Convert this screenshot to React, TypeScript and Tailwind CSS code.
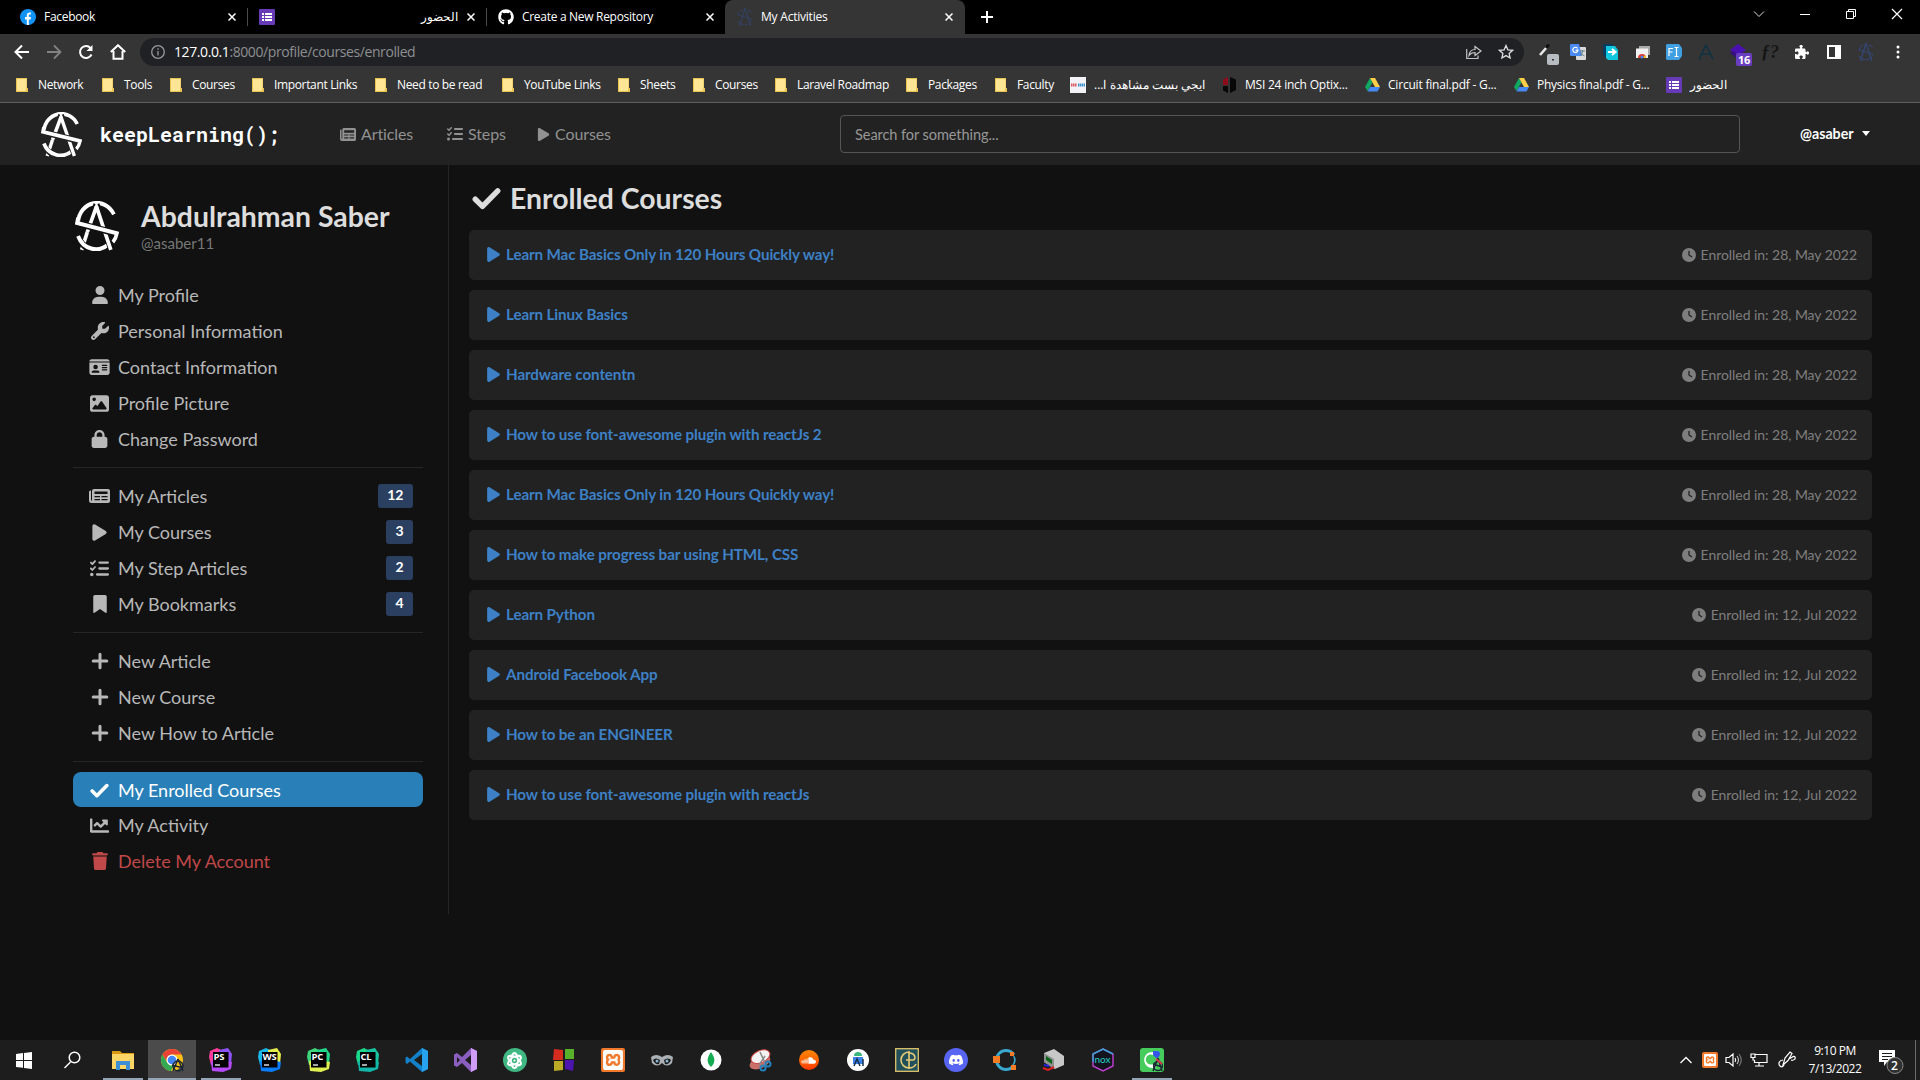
import type { ReactNode } from "react";
import {
  FaUser, FaWrench, FaIdCard, FaImage, FaLock, FaPlay, FaListCheck,
  FaBookmark, FaTrash, FaClock, FaGithub, FaPuzzlePiece, FaAtom,
} from "react-icons/fa6";
import { FaChartLine } from "react-icons/fa";
import { SiXampp, SiDiscord, SiSoundcloud } from "react-icons/si";

function Logo({ className, gap = "#222222" }: { className: string; gap?: string }) {
  return (
    <svg viewBox="10 7 43 45" preserveAspectRatio="none" className={className} fill="none">
      <path d="M13 26A18.500 18.500 0 0 1 48 19" stroke="#fff" strokeWidth="3.8" />
      <path d="M31 10 22 35M31 10l9 25" stroke={gap} strokeWidth="6" />
      <path d="M22 35 16.500 51" stroke="#fff" strokeWidth="3.600" />
      <path d="M12.500 38.500A19 19 0 0 0 43 46" stroke={gap} strokeWidth="6" />
      <path d="M13 38.500A18.800 18.800 0 0 0 42.500 46" stroke="#fff" strokeWidth="3.8" />
      <path d="M39 33l6.500 18" stroke={gap} strokeWidth="6" />
      <path d="M31 12 22 35M31 12 45 51" stroke="#fff" strokeWidth="3.6" />
      <path d="m29 13 2-6 2 6z" fill="#fff" />
      <path d="M14 27.500 50 36" stroke={gap} strokeWidth="6" />
      <path d="M13 22 12 26.800 51 36q-1 5-4 8" stroke="#fff" strokeWidth="3.6" />
    </svg>
  );
}

function Newspaper({ className }: { className: string }) {
  return (
    <svg viewBox="0 0 21 14" preserveAspectRatio="none" className={className}>
      <path fill="currentColor" fillRule="evenodd" d="M5 0h14a2 2 0 0 1 2 2v10a2 2 0 0 1-2 2H2.500A2.500 2.500 0 0 1 0 11.500V3a1.500 1.500 0 0 1 1.500-1.500H2v10h1V2a2 2 0 0 1 2-2zM5.500 2.500v2.500h13V2.500zM5.500 7v1.200h5.500V7zM12.500 7v1.200h6V7zM5.500 10v1.200h5.500V10zM12.500 10v1.200h6V10z" />
    </svg>
  );
}

function Check({ className }: { className: string }) {
  return (
    <svg viewBox="0 0 20 16" className={className} fill="none" stroke="currentColor" strokeWidth="3.800" strokeLinecap="round" strokeLinejoin="round">
      <path d="m2.200 8.500 5 5L17.800 2.700" />
    </svg>
  );
}

function Plus() {
  return (
    <svg viewBox="0 0 18 18" className="size-[18px]" fill="none" stroke="currentColor" strokeWidth="3" strokeLinecap="round">
      <path d="M9 2.200v13.600M2.200 9h13.600" />
    </svg>
  );
}

function MiniLogo({ color }: { color: string }) {
  return (
    <svg viewBox="0 0 18 20" className="h-5 w-[18px]" fill="none" stroke={color} strokeWidth="1.3">
      <path d="M9 1 3.500 19M9 1l5.500 18M2 8l14 4" />
      <path d="M2 8a7.500 7.500 0 0 1 4-5M12 3a7 7 0 0 1 3.500 3M2 14a8 8 0 0 0 14-1" strokeDasharray="3 1" />
    </svg>
  );
}

function FormsIcon() {
  return (
    <svg viewBox="0 0 16 16" className="size-4 shrink-0">
      <rect width="16" height="16" rx="1" fill="#673ab7" />
      <path d="M3 4h2v2H3zM6 4h7v2H6zM3 7h2v2H3zM6 7h7v2H6zM3 10h2v2H3zM6 10h7v2H6z" fill="#fff" />
    </svg>
  );
}

function Folder() {
  return (
    <svg viewBox="0 0 12 14" className="h-[14px] w-3 shrink-0">
      <path d="M0 0h11v10h1v4H0z" fill="#e8c34f" />
      <path d="M1 1h9.500v9L9.500 13H1z" fill="#ffe694" />
    </svg>
  );
}

function Drive() {
  return (
    <svg viewBox="0 0 15 14" className="h-[14px] w-[15px] shrink-0">
      <path d="M5 0 0 9l2.500 4L7.500 4.500z" fill="#11a861" />
      <path d="M5 0h5l5 9h-5z" fill="#ffcf48" />
      <path d="M5 9h10l-2.500 4.500h-10z" fill="#4688f4" />
    </svg>
  );
}

function Close() {
  return (
    <svg viewBox="0 0 8 8" className="size-2 shrink-0" stroke="#fff" strokeWidth="1.500">
      <path d="m.5.5 7 7m0-7-7 7" />
    </svg>
  );
}

function TabStrip() {
  return (
    <div className="flex h-[34px] items-center bg-black text-[12px] tracking-[-0.3px] text-white">
      <div className="flex w-[248px] items-center border-r border-[#4a4a4a] pl-5 pr-[11px]">
        <svg viewBox="0 0 16 16" className="mr-2 size-4">
          <circle cx="8" cy="8" r="8" fill="#1192f4" />
          <path d="M6.800 16v-5.600H5V8.100h1.800V6.600c0-2 1-3 2.900-3h1.200v2H9.800c-.7 0-1 .4-1 1.100v1.400h2.100l-.3 2.300H8.800V16z" fill="#fff" />
        </svg>
        <span className="flex-1">Facebook</span>
        <Close />
      </div>
      <div className="flex w-[239px] items-center border-r border-[#4a4a4a] pl-[11px] pr-[11px]">
        <FormsIcon />
        <span className="mr-[9px] flex-1 text-right tracking-normal">الحضور</span>
        <Close />
      </div>
      <div className="flex w-[238px] items-center pl-[11px] pr-[11px]">
        <FaGithub className="mr-2 size-4" />
        <span className="flex-1">Create a New Repository</span>
        <Close />
      </div>
      <div className="flex h-full w-[240px] items-center rounded-t-lg bg-[#353535] pl-[11px] pr-3">
        <MiniLogo color="#33415f" />
        <span className="ml-[7px] flex-1 tracking-[-0.22px]">My Activities</span>
        <Close />
      </div>
      <svg viewBox="0 0 12 12" className="ml-4 size-3" stroke="#fff" strokeWidth="2"><path d="M6 0v12M0 6h12" /></svg>
      <div className="ml-auto flex items-center gap-[34px] self-start pr-[17px] pt-2">
        <svg viewBox="0 0 12 12" className="size-3" fill="none" stroke="#ddd"><path d="m1 3.500 5 5 5-5" /></svg>
        <svg viewBox="0 0 12 12" className="size-3" stroke="#fff"><path d="M1 6.500h10" /></svg>
        <svg viewBox="0 0 12 12" className="size-3" fill="none" stroke="#fff"><path d="M1.500 3.500h7v7h-7zM3.500 3V1.500h7v7H9" /></svg>
        <svg viewBox="0 0 12 12" className="size-3" stroke="#fff" strokeWidth="1.200"><path d="m1 1 10 10m0-10L1 11" /></svg>
      </div>
    </div>
  );
}

function Slot({ className, children }: { className: string; children: ReactNode }) {
  return <div className={`relative flex h-6 shrink-0 items-center justify-center ${className}`}>{children}</div>;
}

function Toolbar() {
  return (
    <div className="flex h-9 items-center bg-[#353535] pl-[6px]">
      <Slot className="w-8">
        <svg viewBox="0 0 16 16" className="size-4" fill="none" stroke="#fff" strokeWidth="2"><path d="M15 8H2M8 1.500 1.500 8 8 14.500" /></svg>
      </Slot>
      <Slot className="w-8">
        <svg viewBox="0 0 16 16" className="size-4" fill="none" stroke="#828282" strokeWidth="1.800"><path d="M1 8h13M8 1.500 14.500 8 8 14.500" /></svg>
      </Slot>
      <Slot className="w-8">
        <svg viewBox="0 0 16 16" className="size-4" fill="none" stroke="#fff" strokeWidth="2"><path d="M13.500 10.500A6 6 0 1 1 12.500 4" /><path d="M14.500 1v6h-6z" fill="#fff" stroke="none" /></svg>
      </Slot>
      <Slot className="w-8">
        <svg viewBox="0 0 16 16" className="size-4" fill="none" stroke="#fff" strokeWidth="2"><path d="M.8 8 8 1.200 15.200 8M3.500 7v7.800h9V7" /></svg>
      </Slot>
      <div className="ml-[6px] flex h-7 w-[1384px] items-center rounded-full bg-[#202124] pl-[11px] pr-[2px] text-[14px] tracking-[-0.41px]">
        <svg viewBox="0 0 14 14" className="mr-[9px] size-[14px]" fill="none" stroke="#9a9a9a" strokeWidth="1.300">
          <circle cx="7" cy="7" r="6.300" /><path d="M7 6v4.500M7 3.300v1.500" />
        </svg>
        <span className="flex-1 pb-px text-[#8d8f92]"><span className="text-white">127.0.0.1</span>:8000/profile/courses/enrolled</span>
        <Slot className="w-8">
          <svg viewBox="0 0 16 16" className="size-4" fill="none" stroke="#c4c4c4" strokeWidth="1.200"><path d="M.7 5v9.500H12V11.500M3 11.500C3.500 7.500 5.500 5.500 9 5.500V2.500L15 7l-6 4.500V8.500C6.500 8.500 4.500 9.500 3 11.500z" /></svg>
        </Slot>
        <Slot className="w-8">
          <svg viewBox="0 0 16 16" className="size-4" fill="none" stroke="#ddd" strokeWidth="1.300"><path d="m8 1.500 1.900 4.300 4.700.5-3.500 3.100 1 4.600L8 11.600 3.900 14l1-4.600-3.500-3.100 4.700-.5z" /></svg>
        </Slot>
      </div>
      <Slot className="ml-[6px] w-8">
        <svg viewBox="0 0 22 22" className="ml-[5px] mt-[5px] size-[22px] shrink-0">
          <path d="m2 11 7-8" stroke="#e8e8e8" strokeWidth="2.600" /><path d="m8 4 3-3.500" stroke="#111" strokeWidth="3" />
          <rect x="9" y="10" width="12" height="11" rx="2" fill="#b6bcc2" /><rect x="14" y="15" width="2" height="1.500" fill="#333" />
        </svg>
      </Slot>
      <Slot className="w-8">
        <svg viewBox="0 0 16 16" className="size-4">
          <rect x="6" y="3" width="10" height="13" rx="1" fill="#dadada" /><path d="M0 1q0-1 1-1h8l3 12H1q-1 0-1-1z" fill="#4b8bf5" />
          <path d="M7.500 4.300A2.600 2.600 0 1 0 8 6.200H5.500" stroke="#fff" strokeWidth="1.200" fill="none" /><path d="M10 7h5M12.500 6v1c0 2-1 4-2 5m0-4c1 2 2 3 4 4" stroke="#607d8b" fill="none" />
        </svg>
      </Slot>
      <Slot className="w-[33px]">
        <svg viewBox="0 0 16 16" className="size-4"><path d="M0 0h9l2 3v11H3L0 10z" fill="#063d60" /><path d="M3 2h9l3 4v10H5l-2-2z" fill="#11c7dd" /><path d="M5 8h7M9 5l3.500 3L9 11" stroke="#fff" strokeWidth="2" fill="none" /></svg>
      </Slot>
      <Slot className="w-[31px]">
        <svg viewBox="0 0 16 16" className="size-4"><path d="M4 2h11v9H4z" fill="#aaa" /><path d="M1 4.500h12V14H1z" fill="#f2f2f2" /><path d="M3 14a4 4 0 0 1 8 0z" fill="#df3b30" /><circle cx="7" cy="13" r="1.500" fill="#4285f4" /><path d="M9 14a3 3 0 0 0-.5-2l2-.5.8 2.500z" fill="#f6c026" /></svg>
      </Slot>
      <Slot className="w-8">
        <svg viewBox="0 0 16 16" className="size-4"><path d="M1 0h12l3 4v8l-3 4H1l-1-1V1z" fill="#3f9fe0" /><path d="M3 12V4.500h4M3 8h3.500M8.500 3.500h4M10.500 3.500v9M8.500 12.500h4" stroke="#fff" strokeWidth="1.200" fill="none" /></svg>
      </Slot>
      <Slot className="w-8">
        <svg viewBox="0 0 16 16" className="size-4" fill="none" stroke="#123242" strokeWidth="1.700"><path d="M1 15.500 8 1l7 14.500M4 10h8" /></svg>
      </Slot>
      <Slot className="w-8">
        <svg viewBox="0 0 16 16" className="size-4"><path d="m8 0 8 6-8 6-8-6z" fill="#4a10b0" /><path d="m0 9 8 6 3-2-8-6z" fill="#351080" /></svg>
        <span className="absolute left-[14px] top-[13px] rounded-[2px] bg-[#6a3ec0] px-[2px] text-[11px] font-bold leading-[13px] tracking-tight text-white">16</span>
      </Slot>
      <Slot className="w-8"><span className="font-['Liberation_Serif',serif] text-[18px] font-bold italic text-[#151515]">ƒ?</span></Slot>
      <Slot className="w-8"><FaPuzzlePiece className="size-[14px] text-white" /></Slot>
      <Slot className="w-8">
        <svg viewBox="0 0 14 14" className="size-[14px]"><path d="M0 0h14v14H0zM2 2v10h6V2z" fillRule="evenodd" fill="#fff" /></svg>
      </Slot>
      <Slot className="w-8"><MiniLogo color="#344674" /></Slot>
      <Slot className="w-8">
        <svg viewBox="0 0 4 14" className="h-[14px] w-1" fill="#fff"><circle cx="2" cy="2" r="1.500" /><circle cx="2" cy="7" r="1.500" /><circle cx="2" cy="12" r="1.500" /></svg>
      </Slot>
    </div>
  );
}

const bookmarks = [
  ["Network", "w-[86px]"], ["Tools", "w-[68px]"], ["Courses", "w-[82px]"], ["Important Links", "w-[123px]"],
  ["Need to be read", "w-[127px]"], ["YouTube Links", "w-[116px]"], ["Sheets", "w-[75px]"], ["Courses", "w-[82px]"],
  ["Laravel Roadmap", "w-[131px]"], ["Packages", "w-[89px]"], ["Faculty", "w-[75px]"],
];

function BookmarkBar() {
  return (
    <div className="flex h-[33px] items-center whitespace-nowrap border-b border-[#5f5f5f] bg-[#353535] pb-[3px] pl-4 text-[12px] tracking-[-0.35px] text-white">
      {bookmarks.map(([label, width], i) => (
        <div key={i} className={`flex shrink-0 items-center gap-[10px] ${width}`}><Folder />{label}</div>
      ))}
      <div className="flex w-[151px] shrink-0 items-center gap-2">
        <svg viewBox="0 0 16 16" className="size-4 shrink-0"><rect width="16" height="16" fill="#f2f2f6" /><path d="M1 8h6" stroke="#df5a5a" strokeWidth="3" strokeDasharray="1.500 .5" /><path d="M8 8h7" stroke="#3b90d0" strokeWidth="3" strokeDasharray="1.500 .5" /></svg>
        <span dir="rtl" className="text-[12px]">ايجي بست مشاهدة ا...</span>
      </div>
      <div className="flex w-[144px] shrink-0 items-center gap-2 tracking-[-0.22px]">
        <svg viewBox="0 0 16 16" className="size-4 shrink-0"><path d="m7 0-5 2.500V8h5z" fill="#8d0c1c" /><path d="m9 0 6 2.500V13l-6 3zM2 9h5v7l-5-2.500z" fill="#080808" /></svg>
        MSI 24 inch Optix...
      </div>
      <div className="flex w-[149px] shrink-0 items-center gap-2 tracking-[-0.2px]"><Drive />Circuit final.pdf - G...</div>
      <div className="flex w-[152px] shrink-0 items-center gap-2 tracking-[-0.24px]"><Drive />Physics final.pdf - G...</div>
      <div className="flex shrink-0 items-center gap-2"><FormsIcon /><span dir="rtl" className="tracking-normal">الحضور</span></div>
    </div>
  );
}

function SiteHeader() {
  return (
    <header className="flex h-[62px] items-center bg-[#222222] pl-[41px] text-[#919191]">
      <Logo className="h-[45px] w-[41px]" />
      <span className="ml-[18px] w-[240px] font-['Roboto_Mono','DejaVu_Sans_Mono',monospace] text-[20px] font-bold text-white">keepLearning();</span>
      <nav className="flex w-[500px] items-center text-[16px] tracking-[-0.1px]">
        <a className="flex w-[107px] items-center gap-[5px]"><Newspaper className="h-[13px] w-4" />Articles</a>
        <a className="flex w-[90px] items-center gap-[5px]"><FaListCheck className="size-4" />Steps</a>
        <a className="flex items-center gap-[5px]"><FaPlay className="h-[15px] w-[13px]" />Courses</a>
      </nav>
      <div className="flex h-[38px] w-[900px] items-center rounded-[4px] border border-[#555555] pl-[14px] pt-[2px] text-[14.600px] tracking-[-0.1px] text-[#979797]">Search for something...</div>
      <div className="ml-[60px] flex items-center gap-2 text-[14.200px] font-bold text-white">
        @asaber
        <svg viewBox="0 0 8 5" className="h-[5px] w-2"><path d="M0 0h8L4 5z" fill="#fff" /></svg>
      </div>
    </header>
  );
}

function Item({ icon, label, badge, className = "text-[#b8b8b8] h-9" }: { icon: ReactNode; label: string; badge?: string; className?: string }) {
  return (
    <a className={`flex items-center pr-[10px] text-[18px] ${className}`}>
      <span className="ml-4 mr-2 flex w-[21px] justify-center">{icon}</span>
      <span className="flex-1">{label}</span>
      {badge && <span className="mb-px h-6 rounded-[3px] bg-[#2b3f60] px-[9.500px] text-[14px] font-bold leading-[22px] text-white">{badge}</span>}
    </a>
  );
}

const Rule = ({ className }: { className: string }) => <div className={`h-px bg-[#262626] ${className}`} />;

function Sidebar() {
  return (
    <aside className="h-[749px] w-[449px] shrink-0 border-r border-[#262626] pl-[73px] pr-[25px] pt-[35px]">
      <div className="flex h-[77px] items-start">
        <Logo className="ml-[2px] mt-px h-[50px] w-11" gap="#111111" />
        <div className="ml-[22px] whitespace-nowrap">
          <h1 className="text-[28.400px] font-bold leading-8 text-[#dddddd]">Abdulrahman Saber</h1>
          <p className="mt-px text-[15px] leading-5 text-[#777777]">@asaber11</p>
        </div>
      </div>
      <Item icon={<FaUser className="size-[18px]" />} label="My Profile" />
      <Item icon={<FaWrench className="size-[18px]" />} label="Personal Information" />
      <Item icon={<FaIdCard className="h-[18px] w-[21px]" />} label="Contact Information" />
      <Item icon={<FaImage className="size-[19px]" />} label="Profile Picture" />
      <Item icon={<FaLock className="h-[18px] w-[19px]" />} label="Change Password" />
      <Rule className="mb-[10px] mt-[10px]" />
      <Item icon={<Newspaper className="h-[14px] w-[21px]" />} label="My Articles" badge="12" />
      <Item icon={<FaPlay className="size-[19px]" />} label="My Courses" badge="3" />
      <Item icon={<FaListCheck className="size-[19px]" />} label="My Step Articles" badge="2" />
      <Item icon={<FaBookmark className="size-[18px]" />} label="My Bookmarks" badge="4" />
      <Rule className="mb-[10px] mt-[10px]" />
      <Item icon={<Plus />} label="New Article" />
      <Item icon={<Plus />} label="New Course" />
      <Item icon={<Plus />} label="New How to Article" />
      <Rule className="mb-[10px] mt-[10px]" />
      <Item icon={<Check className="h-[15px] w-[19px]" />} label="My Enrolled Courses" className="h-[35px] rounded-lg bg-[#2980b9] pt-px text-white" />
      <Item icon={<FaChartLine className="size-[19px]" />} label="My Activity" />
      <Item icon={<FaTrash className="size-[18px]" />} label="Delete My Account" className="h-9 text-[#c04848]" />
    </aside>
  );
}

const courses = [
  ["Learn Mac Basics Only in 120 Hours Quickly way!", "28, May 2022"],
  ["Learn Linux Basics", "28, May 2022"],
  ["Hardware contentn", "28, May 2022"],
  ["How to use font-awesome plugin with reactJs 2", "28, May 2022"],
  ["Learn Mac Basics Only in 120 Hours Quickly way!", "28, May 2022"],
  ["How to make progress bar using HTML, CSS", "28, May 2022"],
  ["Learn Python", "12, Jul 2022"],
  ["Android Facebook App", "12, Jul 2022"],
  ["How to be an ENGINEER", "12, Jul 2022"],
  ["How to use font-awesome plugin with reactJs", "12, Jul 2022"],
];

function CourseList() {
  return (
    <main className="ml-5 w-[1403px] pt-4">
      <h2 className="flex h-[34px] items-center gap-[9px] pl-[3px] text-[28.400px] font-bold text-[#dddddd]">
        <Check className="h-[23px] w-[29px]" />Enrolled Courses
      </h2>
      <div className="mt-[15px] flex flex-col gap-[10px]">
        {courses.map(([title, date], i) => (
          <div key={i} className="flex h-[50px] items-center rounded-[5px] bg-[#222222] pl-[17px] pr-[15px]">
            <FaPlay className="mb-px h-[17px] w-[15px] text-[#3d80c6]" />
            <span className="ml-[5px] flex-1 pb-[2px] text-[15.200px] font-bold tracking-[-0.11px] text-[#3d80c6]">{title}</span>
            <FaClock className="mr-[5px] size-[14px] text-[#7e7e7e]" />
            <span className="pb-px text-[14px] tracking-[-0.05px] text-[#7e7e7e]">Enrolled in: {date}</span>
          </div>
        ))}
      </div>
    </main>
  );
}

function JetBrains({ label, a, b, c }: { label: string; a: string; b: string; c: string }) {
  return (
    <div className="relative size-6">
      <svg viewBox="0 0 24 24" className="size-6">
        <path d="m1 3 7-3 6 3-2 12-10 2-2-8z" fill={a} /><path d="m10 2 9-2 4 6-1 10-10 2z" fill={b} /><path d="m2 13 10-1 11 2-1 7-8 3-11-1z" fill={c} />
        <rect x="4" y="4" width="15.500" height="15.500" fill="#000" /><path d="M6 17h5" stroke="#fff" strokeWidth="1.300" />
      </svg>
      <span className="absolute left-[5px] top-[4px] font-['Open_Sans',sans-serif] text-[9.500px] font-bold leading-[10px] tracking-[-0.3px] text-white">{label}</span>
    </div>
  );
}

const I = ({ children }: { children: ReactNode }) => <svg viewBox="0 0 24 24" className="size-6" fill="none">{children}</svg>;

function XamppTile({ className }: { className: string }) {
  return <div className={`flex items-center justify-center rounded-[2px] bg-[#f0792b] p-[2px] text-white ${className}`}><SiXampp className="size-full" /></div>;
}

const apps: { open?: string; icon: ReactNode }[] = [
  { icon: <I><path d="m3 6 7-1v7H3zM11 4.900 19 4v8h-8zM3 13h7v6.800L3 19zM11 13h8v8l-8-1.100z" fill="#fff" /></I> },
  { icon: <I><circle cx="12.500" cy="9.500" r="5.300" stroke="#fff" strokeWidth="1.500" /><path d="m8.500 14-6 6" stroke="#fff" strokeWidth="1.500" /></I> },
  { open: "w-10", icon: <I><path d="M1 3h8l2 2h12v16H1z" fill="#d99a13" /><path d="M1 6h22v15H1z" fill="#ffd666" /><path d="M5 22v-9h14v9h-4v-5H9v5z" fill="#3c8fd5" /></I> },
  { open: "w-12", icon: <I><circle cx="12" cy="12" r="11" fill="#fbc116" /><path d="M2.500 6.500A11 11 0 0 1 21.500 6.500H12a5.500 5.500 0 0 0-5 7.500z" fill="#ea4335" /><path d="m2.500 6.500 5 8.500a5.500 5.500 0 0 0 6.500 2l-3 6A11 11 0 0 1 2.500 6.500z" fill="#34a853" /><circle cx="12" cy="12" r="5.500" fill="#fff" /><circle cx="12" cy="12" r="4.300" fill="#4285f4" /><path d="m18 11-5 12m5-12 5 12m-11-6 11 3" stroke="#1c2634" strokeWidth="1.500" /><circle cx="18" cy="18" r="5" stroke="#1c2634" strokeWidth="1.400" /></I> },
  { open: "w-10", icon: <JetBrains label="PS" a="#ff3d9a" b="#8b53f5" c="#b74af7" /> },
  { icon: <JetBrains label="WS" a="#1ab8e8" b="#e4ec4b" c="#087cfa" /> },
  { icon: <JetBrains label="PC" a="#3ed47c" b="#21d789" c="#e0f04e" /> },
  { icon: <JetBrains label="CL" a="#1bd88b" b="#17c3a0" c="#12b5a8" /> },
  { icon: <I><path d="M17 0 5 11 2 8.500.5 9.500v5L2 16l3-2.500L17 24l6-3V3z" fill="#1480c8" /><path d="m17 6-8 6 8 6z" fill="#1c1c1c" /><path d="M17 0v24l6-3V3z" fill="#27a2ee" /></I> },
  { icon: <I><path d="M17 0 8 9 3 5 0 6.500v11L3 19l5-4 9 9 6-3V3zM3 9l3 3-3 3zM17 7v10l-6-5z" fill="#8a5fc0" fillRule="evenodd" /><path d="m17 0 6 3v18l-6 3z" fill="#cf9cf8" /></I> },
  { icon: <div className="flex size-6 items-center justify-center rounded-full bg-[#41b883] text-white"><FaAtom className="size-[17px]" /></div> },
  { icon: <I><path d="m2 1 9 1v10H1z" fill="#d62c20" /><path d="M13 1h9v10h-9z" fill="#59b02b" /><path d="M2 13h9v9l-9 1z" fill="#bcab24" /><path d="M13 12h9l-1 11-8-2z" fill="#4b15ae" /></I> },
  { icon: <XamppTile className="size-6" /> },
  { icon: <I><path d="M1 9q5-4 11 0 6-4 11 0l-1 6q-5 5-10 0-5 5-10 0z" fill="#aab0b4" /><path d="M3 12q3-3 7 0l-1 4q-4 1-6-4zM21 12q-3-3-7 0l1 4q4 1 6-4z" fill="#16191c" /><circle cx="7" cy="13" r="1.500" fill="#8ab6d0" /><circle cx="17" cy="13" r="1.500" fill="#8ab6d0" /></I> },
  { icon: <I><circle cx="12" cy="12" r="10.500" fill="#fff" /><path d="M12 4c5 7 4 11 0 15-4-4-5-8 0-15z" fill="#13aa52" /></I> },
  { icon: <I><ellipse cx="11" cy="14" rx="11" ry="6" fill="#c9706a" transform="rotate(-25 12 12)" /><ellipse cx="13" cy="9" rx="10" ry="6" fill="#f3f3f3" stroke="#d04440" transform="rotate(-25 12 10)" /><path d="m12 4 6 13M17 8l-6 9" stroke="#888" strokeWidth="1.500" /><circle cx="20" cy="16" r="2.500" stroke="#2382bd" strokeWidth="2" /><circle cx="15" cy="20" r="2.500" stroke="#2382bd" strokeWidth="2" /></I> },
  { icon: <div className="flex size-[20px] items-center justify-center rounded-full bg-linear-to-b from-[#ff8500] to-[#ff3500] text-white"><SiSoundcloud className="size-[15px]" /></div> },
  { icon: <I><circle cx="12" cy="12" r="11" fill="#fff" /><path d="M7 9h10v7H7z" fill="#3b82e8" /><path d="M8 8a4 4 0 0 1 8 0z" fill="#3bb67c" /><path d="m8 18 3-7 3 7M17 11v7" stroke="#173050" strokeWidth="1.500" /></I> },
  { icon: <I><rect x=".7" y=".7" width="22.600" height="22.600" fill="#21505a" stroke="#e0c36d" strokeWidth="1.300" /><path d="M14 3v18M14 4a8 8 0 1 0 0 16M14 5c7 0 7 7 4 7h-7M14 20c3 0 6-2 7-4" stroke="#e8ca74" strokeWidth="1.600" /></I> },
  { icon: <div className="flex size-6 items-center justify-center rounded-full bg-[#5865f2] text-white"><SiDiscord className="size-[14px]" /></div> },
  { icon: <I><circle cx="13" cy="12" r="9.500" stroke="#3aa9d0" strokeWidth="3" /><path d="M22 6a10 10 0 0 1 0 12" stroke="#1c1c1c" strokeWidth="3" /><rect y="8" width="7" height="7" fill="#f47a24" /><rect x="17" y="4" width="4" height="4" fill="#f47a24" /><rect x="18" y="17" width="5" height="5" fill="#f47a24" /></I> },
  { icon: <I><path d="m2 5 10-4 10 7v9l-9 4L2 14z" fill="#c8c8c8" /><path d="m2 5 10 6v10L2 14z" fill="#8f8f8f" /><path d="m4 8 6 4v4l-6-4z" fill="#061" /><path d="m1 20 5 2 6-3" stroke="#e02020" strokeWidth="2" /><path d="m2 17 5 1" stroke="#2222e0" strokeWidth="2" /></I> },
  { icon: <div className="relative size-6"><I><path d="m12 1 10 5v12l-10 5-10-5V6z" fill="#14141e" stroke="#c03fd0" strokeWidth="1.400" /><path d="M2 14V6l10-5 10 5" stroke="#35a8d8" strokeWidth="1.400" /></I><span className="absolute inset-x-0 top-[5px] text-center font-['Lato',sans-serif] text-[10px] leading-3 text-[#25d0c8]">nox</span></div> },
  { open: "w-10", icon: <I><rect width="24" height="24" rx="3" fill="#46cc5c" /><path d="M13 4a8 8 0 1 0 3 15l-3-3a5 5 0 1 1 0-9z" fill="#fff" /><path d="M13 3h4a3 3 0 0 1 3 3c0 2-2 4-4 4l-3-3z" fill="#3556e8" /><path d="m18 10-5 13m5-13 4 13m-9-7 9 3" stroke="#1c2634" strokeWidth="1.500" /><circle cx="18" cy="18" r="4.500" stroke="#1c2634" strokeWidth="1.300" /><path d="m16 11 6 5" stroke="#d83a50" strokeWidth="2" /></I> },
];

function Taskbar() {
  return (
    <footer className="flex h-10 items-center bg-[#1d1d1d] font-['Open_Sans',sans-serif]">
      <div className="flex h-full">
        {apps.map((app, i) => (
          <div key={i} className="flex h-full w-[49px] justify-center">
            <div className={`relative flex h-full w-12 items-center justify-center ${i === 3 ? "bg-[#4b4b4b]" : ""}`}>
              {app.icon}
              {app.open && <div className={`absolute bottom-0 h-[2px] bg-[#94a5b8] ${app.open}`} />}
            </div>
          </div>
        ))}
      </div>
      <div className="ml-auto flex h-full items-center text-white">
        <svg viewBox="0 0 12 8" className="mr-[10px] h-2 w-3" fill="none" stroke="#fff" strokeWidth="1.300"><path d="m.5 7 5.500-5.500L11.500 7" /></svg>
        <XamppTile className="size-4" />
        <svg viewBox="0 0 18 16" className="ml-[7px] h-4 w-[18px]" fill="none" stroke="#fff" strokeWidth="1.200"><path d="M1 5.500h3L8 2v12l-4-3.500H1zM10 6q1.500 2 0 4" /><path d="M12 4q3 4 0 8" stroke="#bbb" /><path d="M14 2q4.500 6 0 12" stroke="#777" /></svg>
        <svg viewBox="0 0 18 16" className="ml-[7px] h-4 w-[18px]" fill="none" stroke="#fff" strokeWidth="1.200"><path d="M5 2.500h12v8H4.500V8M9 10.500v3M5 14h9M1 2h4v3.500H1zM3 5.500V8h1.500" /></svg>
        <svg viewBox="0 0 18 18" className="ml-[10px] size-[18px]" fill="none" stroke="#fff" strokeWidth="1.200"><path d="M5 14 7 7l5-6 2 1.500-4 7zM5 9c-4 0-5 4-3 6s4 0 4-2M11 8c3-1 5-4 6-2s-2 4-4 3" /></svg>
        <div className="ml-3 w-[54px] whitespace-nowrap text-center text-[12px] leading-[18px] tracking-[-0.45px]">
          <div>9:10 PM</div><div>7/13/2022</div>
        </div>
        <div className="relative ml-[17px] h-6 w-[26px]">
          <svg viewBox="0 0 26 26" className="size-[26px]" fill="none"><path d="M0 2h16v12H8l-3 4v-4H0z" fill="#fff" /><path d="M3 5.500h10M3 8.500h10M3 11.500h6" stroke="#1d1d1d" /><circle cx="16" cy="17.500" r="8" fill="#303030" stroke="#8a8a8a" /></svg>
          <span className="absolute left-[12px] top-[10px] text-[12px] font-semibold leading-[15px]">2</span>
        </div>
        <div className="ml-[10px] h-full w-px bg-[#6a6a6a]" />
        <div className="w-1" />
      </div>
    </footer>
  );
}

export default function App() {
  return (
    <div className="flex h-[1080px] w-[1920px] flex-col overflow-hidden bg-[#111111] font-['Lato',sans-serif]">
      <div className="font-['Open_Sans','Noto_Sans',sans-serif]">
        <TabStrip />
        <Toolbar />
        <BookmarkBar />
      </div>
      <SiteHeader />
      <div className="flex flex-1">
        <Sidebar />
        <CourseList />
      </div>
      <Taskbar />
    </div>
  );
}
